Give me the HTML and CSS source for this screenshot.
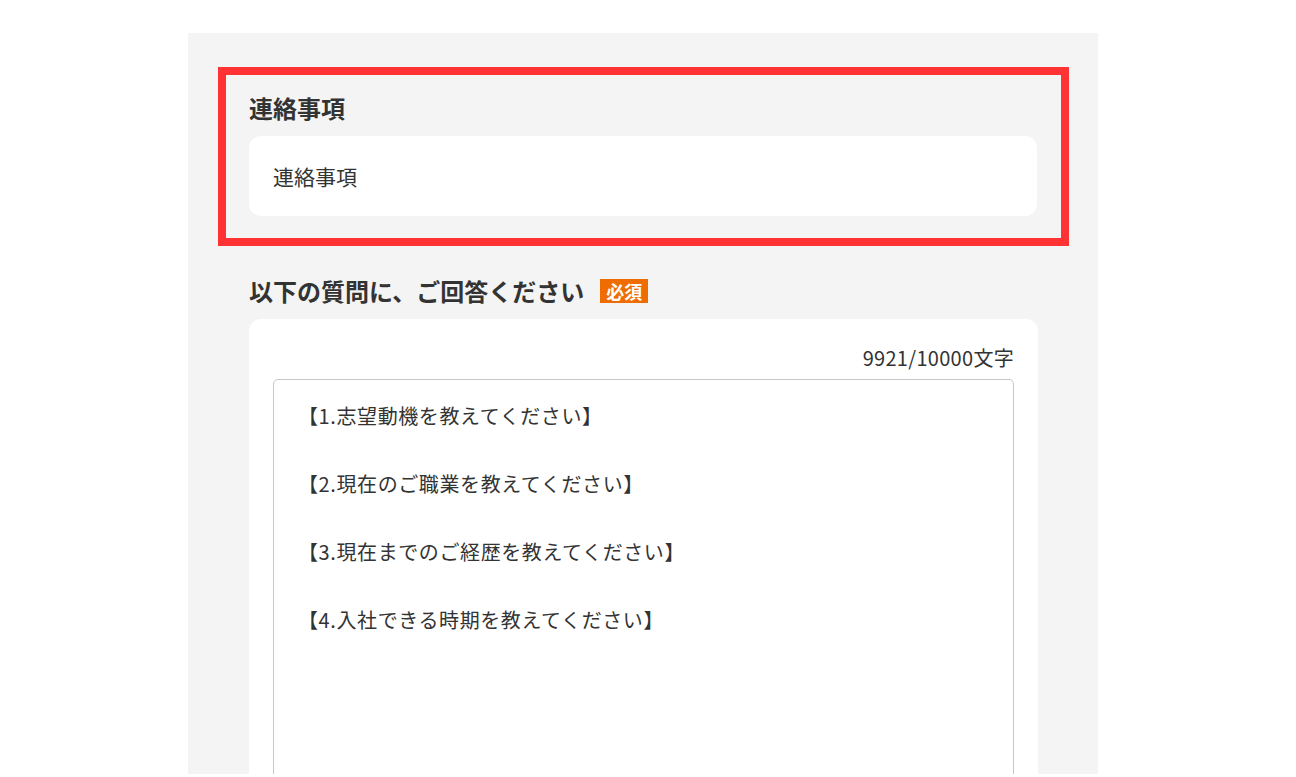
FILE: index.html
```html
<!DOCTYPE html>
<html lang="ja">
<head>
<meta charset="utf-8">
<title>応募フォーム</title>
<link rel="stylesheet" href="styles.css">
</head>
<body>
<main class="panel">
  <section class="notice">
    <h2 class="title">連絡事項</h2>
    <div class="card card-notice">連絡事項</div>
  </section>
  <section class="question">
    <h2 class="title">以下の質問に、ご回答ください<span class="badge">必須</span></h2>
    <div class="card card-answer">
      <div class="counter">9921/10000文字</div>
      <textarea class="answer" readonly>【1.志望動機を教えてください】

【2.現在のご職業を教えてください】

【3.現在までのご経歴を教えてください】

【4.入社できる時期を教えてください】</textarea>
    </div>
  </section>
</main>
</body>
</html>
```
FILE: styles.css
```css
html, body {
  margin: 0;
  padding: 0;
  background: #ffffff;
}
body {
  font-family: "Noto Sans CJK JP", "Noto Sans", sans-serif;
  color: #333333;
  padding-top: 33px;
}
.panel {
  box-sizing: border-box;
  margin-left: 188px;
  width: 910px;
  height: 741px;
  background: #f4f4f4;
  padding: 34px 29px 0 30px;
}
.notice {
  border: 8px solid #ff3333;
  padding: 15px 24px 22px 23px;
}
.title {
  margin: 0;
  font-size: 24px;
  line-height: 36px;
  font-weight: 700;
  color: #333333;
  display: flex;
  align-items: center;
}
.card {
  background: #ffffff;
  border-radius: 12px;
}
.card-notice {
  margin-top: 10px;
  height: 80px;
  box-sizing: border-box;
  padding: 0 24px;
  font-size: 21px;
  line-height: 80px;
}
.question {
  margin: 27px 31px 0 31px;
}
.badge {
  display: inline-block;
  margin-left: 16px;
  margin-top: -1px;
  background: #ee6c00;
  color: #ffffff;
  font-size: 18px;
  line-height: 24px;
  height: 24px;
  padding: 0 6px;
  font-weight: 700;
}
.card-answer {
  margin-top: 10px;
  padding: 27px 24px 24px 24px;
  display: flex;
  flex-direction: column;
}
.counter {
  text-align: right;
  font-size: 20px;
  line-height: 24px;
  letter-spacing: 0.3px;
  color: #333333;
}
.answer {
  margin-top: 9px;
  box-sizing: border-box;
  width: 100%;
  height: 460px;
  border: 1px solid #c8c8c8;
  border-radius: 5px;
  padding: 19px 22px 17px 24px;
  font-family: "Noto Sans CJK JP", "Noto Sans", sans-serif;
  font-size: 20px;
  line-height: 34px;
  letter-spacing: 0.6px;
  color: #333333;
  resize: none;
  outline: none;
  background: #ffffff;
  overflow: hidden;
}
```
